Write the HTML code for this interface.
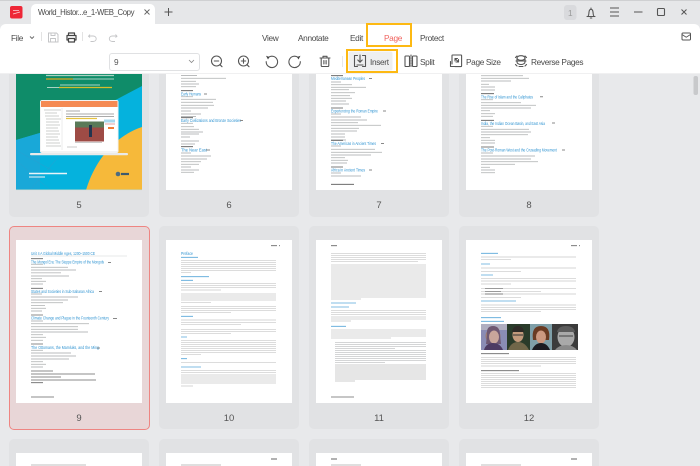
<!DOCTYPE html>
<html><head><meta charset="utf-8"><style>
html,body{margin:0;padding:0;width:700px;height:466px;overflow:hidden;background:#e8e9eb;font-family:"Liberation Sans","DejaVu Sans",sans-serif;color:#444}
div{position:absolute}
.t{position:absolute;font-size:8.3px;letter-spacing:-.35px;line-height:12px;white-space:nowrap;color:#4a4a4a}
.card{position:absolute;width:140px;background:#e1e2e4;border-radius:0 0 5px 5px}
.card.r{border-radius:5px}
.card.b{border-radius:5px 5px 0 0}
.pg{position:absolute;width:126px;background:#fff}
.n{position:absolute;width:140px;text-align:center;font-size:9.5px;color:#555;line-height:12px}
svg{position:absolute;left:0;top:0}
.ic{fill:none;stroke:#555;stroke-width:1.1;stroke-linecap:round;stroke-linejoin:round}
</style></head><body>
<div style="left:0;top:0;width:700px;height:24px;background:#e6e7e9"></div>
<div style="left:0;top:0;width:700px;height:1px;background:#cfd0d2"></div>
<div style="left:31px;top:4px;width:124px;height:24px;background:#fff;border-radius:5px 5px 0 0"></div>
<div style="left:0;top:24px;width:700px;height:49px;background:#fff;border-radius:6px 6px 0 0"></div>
<div style="left:0;top:73px;width:700px;height:1px;background:#f0f0f1"></div>

<!-- cards -->
<div class="card" style="left:9px;top:74px;height:143px"></div>
<div class="card" style="left:159px;top:74px;height:143px"></div>
<div class="card" style="left:309px;top:74px;height:143px"></div>
<div class="card" style="left:459px;top:74px;height:143px"></div>
<div class="card r" style="left:9px;top:226px;height:202px;width:139px;background:#e8d6d7;border:1px solid #ee8582"></div>
<div class="card r" style="left:159px;top:226px;height:203px"></div>
<div class="card r" style="left:309px;top:226px;height:203px"></div>
<div class="card r" style="left:459px;top:226px;height:203px"></div>
<div class="card b" style="left:9px;top:439px;height:27px"></div>
<div class="card b" style="left:159px;top:439px;height:27px"></div>
<div class="card b" style="left:309px;top:439px;height:27px"></div>
<div class="card b" style="left:459px;top:439px;height:27px"></div>

<div class="pg" style="left:166px;top:74px;height:116px"></div>
<div class="pg" style="left:316px;top:74px;height:116px"></div>
<div class="pg" style="left:466px;top:74px;height:116px"></div>
<div class="pg" style="left:16px;top:240px;height:163px"></div>
<div class="pg" style="left:166px;top:240px;height:163px"></div>
<div class="pg" style="left:316px;top:240px;height:163px"></div>
<div class="pg" style="left:466px;top:240px;height:163px"></div>
<div class="pg" style="left:16px;top:453px;height:13px"></div>
<div class="pg" style="left:166px;top:453px;height:13px"></div>
<div class="pg" style="left:316px;top:453px;height:13px"></div>
<div class="pg" style="left:466px;top:453px;height:13px"></div>

<div class="n" style="left:9px;top:200px">5</div>
<div class="n" style="left:159px;top:200px">6</div>
<div class="n" style="left:309px;top:200px">7</div>
<div class="n" style="left:459px;top:200px">8</div>
<div class="n" style="left:9px;top:413px">9</div>
<div class="n" style="left:159px;top:413px">10</div>
<div class="n" style="left:309px;top:413px">11</div>
<div class="n" style="left:459px;top:413px">12</div>

<svg width="700" height="466" viewBox="0 0 700 466">
<defs>
<filter id="b" x="-5%" y="-5%" width="110%" height="110%"><feGaussianBlur stdDeviation="0.3"/></filter>
<clipPath id="c5"><rect x="16" y="74" width="126" height="116"/></clipPath>
</defs>
<!-- page 5 cover -->
<g clip-path="url(#c5)">
<rect x="16" y="60" width="126" height="130" fill="#0f8c69"/>
<path d="M16 140 L70 124 L142 86 V190 H16Z" fill="#05b2dd"/>
<path d="M16 140 L40 133 L40 190 H16Z" fill="#19a8d8"/>
<path d="M142 127 C115 136 95 160 86 190 H142Z" fill="#f6b93a"/>
<path d="M50 190 L16 160 M30 190 L60 155 M16 150 L60 175" stroke="#2aa0d0" stroke-width=".5" fill="none"/>
<g filter="url(#b)">
<path d="M46 75.500h68" stroke="#a9d3c2" stroke-width="1.200"/>
<path d="M46 79h27" stroke="#d9a91f" stroke-width="1.300"/><path d="M73 79h41" stroke="#a9d3c2" stroke-width="1.100"/>
<path d="M60 85h40" stroke="#a9d3c2" stroke-width="1"/>
<path d="M47 87.500h12" stroke="#a9d3c2" stroke-width="1"/><path d="M59 87.500h53" stroke="#d6bd2b" stroke-width="1.300"/>
<rect x="40" y="100" width="78.500" height="53" rx="2" fill="#f2f3f3"/>
<rect x="41" y="101" width="76.500" height="6" fill="#f58a52"/>
<rect x="41" y="107" width="76.500" height="44" fill="#fff"/>
<path d="M44 110h17M45 113h12M45 116h14M46 119h15M46 122h13M46 125h14M46 128h12M46 131h13M46 134h14M46 137h12M46 140h13M46 143h14M46 146h15" stroke="#bcc0bf" stroke-width=".8"/>
<path d="M62 108v42" stroke="#d8d8d8" stroke-width=".5"/>
<path d="M66 111h14M66 114h48M66 116.500h48" stroke="#aaa" stroke-width=".9"/>
<path d="M66 118.500h31" stroke="#e7c33f" stroke-width="1.200"/>
<rect x="75" y="121.500" width="29" height="20" fill="#9e4b45"/>
<rect x="75" y="121.500" width="29" height="6" fill="#5a7a58"/>
<rect x="89" y="125" width="3" height="12" fill="#22354f"/>
<path d="M104 121h11" stroke="#a8d8ee" stroke-width="3"/><path d="M105 124h10" stroke="#f0d0d0" stroke-width="2"/>
<path d="M108 128h6" stroke="#ef7c34" stroke-width="2"/>
<path d="M75 142.500h27M67 147h10" stroke="#bbb" stroke-width=".8"/>
<rect x="30" y="153" width="98" height="2.200" rx="1" fill="#e9eaea"/>
<path d="M29 173.500h38" stroke="#e8f4f9" stroke-width="1.400"/><path d="M29 177h16" stroke="#cde9f2" stroke-width="1.200"/>
<circle cx="118" cy="174" r="2.300" fill="#4d6c80"/><path d="M121 174h8" stroke="#3d5a6e" stroke-width="2.200"/>
</g>
</g>
<rect x="16" y="189.500" width="126" height=".6" fill="#bcd6c8"/>

<g filter="url(#b)" font-family="Liberation Sans, sans-serif">
<!-- page 6 -->
<path d="M181 75.500h16M181 78.300h45M181 81.300h15M181 84h18M181 86.700h15M181 96.700h12M181 99.300h35M181 102.300h32M181 105.300h33M181 108h27M181 111h10M181 114h20M181 116.500h15M181 123.300h12M181 126.700h13M181 129.300h18M181 132h22M181 134h18M181 137h9M181 141h18M181 144h14M181 153h10M181 156h30M181 159h26M181 161.700h20M181 164.300h18M181 167h10M181 170h18M181 172.300h13" stroke="#a8aaac" stroke-width=".9" opacity=".8"/>
<path d="M181 90.700h12M181 117.700h12M181 146.700h12" stroke="#555" stroke-width=".8"/>
<text x="181" y="95.500" font-size="4.600" fill="#2f93d1" textLength="20" lengthAdjust="spacingAndGlyphs">Early Humans</text>
<text x="181" y="122" font-size="4.600" fill="#2f93d1" textLength="60" lengthAdjust="spacingAndGlyphs">Early Civilizations and Bronze Societies</text>
<text x="181" y="151.500" font-size="4.600" fill="#2f93d1" textLength="26" lengthAdjust="spacingAndGlyphs">The Near East</text>
<path d="M204 94h3M240 120.500h3M206 150h4" stroke="#888" stroke-width="1"/>
<!-- page 7 -->
<path d="M331 82h10M331 84.700h21M331 87.300h35M331 89.700h18M331 92.700h24M331 95.700h19M331 98.300h21M331 101h15M331 104h18M331 114h10M331 117h30M331 120h36M331 122.700h27M331 125.300h50M331 128.300h28M331 131h26M331 134h14M331 137h14M331 140h15M331 146h10M331 149.300h44M331 152.300h51M331 155h40M331 157.700h14M331 160.300h17M331 163h16M331 173h10M331 176h30" stroke="#a8aaac" stroke-width=".9" opacity=".8"/>
<path d="M331 75.700h12M331 108h12M331 140.300h12M331 167h12M331 184.300h23" stroke="#555" stroke-width=".8"/>
<text x="331" y="80" font-size="4.600" fill="#2f93d1" textLength="34" lengthAdjust="spacingAndGlyphs">Mediterranean Peoples</text>
<text x="331" y="112.500" font-size="4.600" fill="#2f93d1" textLength="47" lengthAdjust="spacingAndGlyphs">Experiencing the Roman Empire</text>
<text x="331" y="144.800" font-size="4.600" fill="#2f93d1" textLength="45" lengthAdjust="spacingAndGlyphs">The Americas in Ancient Times</text>
<text x="331" y="171.500" font-size="4.600" fill="#2f93d1" textLength="34" lengthAdjust="spacingAndGlyphs">Africa in Ancient Times</text>
<path d="M369 78.500h3M383 111h3M381 143.500h3M369 170h3" stroke="#888" stroke-width="1"/>
<!-- page 8 -->
<path d="M481 75.700h42M481 78.300h48M481 81h30M481 84.300h8M481 87h14M481 90h14M481 99.700h12M481 102.700h40M481 105.300h55M481 108h50M481 110.700h9M481 113.700h14M481 116.300h12M481 126.300h12M481 129.300h48M481 132h50M481 134.700h47M481 137.700h9M481 140.300h14M481 143h14M481 153h12M481 156h54M481 159h50M481 161.700h57M481 164.300h34M481 167.300h9M481 170h14M481 172.700h14" stroke="#a8aaac" stroke-width=".9" opacity=".8"/>
<path d="M481 93.700h13M481 120.300h13M481 147h13" stroke="#555" stroke-width=".8"/>
<text x="481" y="98.500" font-size="4.600" fill="#2f93d1" textLength="52" lengthAdjust="spacingAndGlyphs">The Rise of Islam and the Caliphates</text>
<text x="481" y="125" font-size="4.600" fill="#2f93d1" textLength="64" lengthAdjust="spacingAndGlyphs">India, the Indian Ocean Basin, and East Asia</text>
<text x="481" y="151.500" font-size="4.600" fill="#2f93d1" textLength="76" lengthAdjust="spacingAndGlyphs">The Post-Roman West and the Crusading Movement</text>
<path d="M540 96.700h3M552 123h3M562 150h3" stroke="#888" stroke-width="1"/>
<!-- page 9 -->
<path d="M31 256h96" stroke="#cfd1d3" stroke-width=".6"/>
<path d="M31 264.300h12M31 267.300h37M31 270h45M31 272.800h30M31 276h38M31 278.700h11M31 281.300h15M31 284h12M31 294h11M31 297h47M31 300h37M31 302.700h32M31 305.600h14M31 308.300h15M31 311h11M31 321h12M31 323.700h58M31 326.700h47M31 329.300h47M31 332h57M31 334.700h12M31 337.300h15M31 340.300h12M31 350.300h12M31 353h40M31 356h45M31 359h38M31 361.700h12M31 364.300h15M31 367h12" stroke="#a8aaac" stroke-width=".9" opacity=".8"/>
<path d="M31 258.700h12M31 288.300h12M31 315h12M31 344h12M31 371h22M31 374h64M31 377h30M31 380h65M31 382.700h12M31 397h23" stroke="#666" stroke-width=".8"/>
<text x="31" y="255" font-size="4.700" fill="#2f93d1" textLength="64" lengthAdjust="spacingAndGlyphs">Unit 4 A Global Middle Ages, 1200–1500 CE</text>
<text x="31" y="263.500" font-size="4.600" fill="#2f93d1" textLength="73" lengthAdjust="spacingAndGlyphs">The Mongol Era: The Steppe Empire of the Mongols</text>
<text x="31" y="292.800" font-size="4.600" fill="#2f93d1" textLength="63" lengthAdjust="spacingAndGlyphs">States and Societies in Sub-Saharan Africa</text>
<text x="31" y="319.500" font-size="4.600" fill="#2f93d1" textLength="78" lengthAdjust="spacingAndGlyphs">Climate Change and Plague in the Fourteenth Century</text>
<text x="31" y="348.800" font-size="4.600" fill="#2f93d1" textLength="68" lengthAdjust="spacingAndGlyphs">The Ottomans, the Mamluks, and the Ming</text>
<path d="M108 262.500h3M99 291.500h3M113 318.500h4M97 348h3" stroke="#888" stroke-width="1"/>
<!-- page 10 -->
<path d="M271 245.700h6M279 245.700h1" stroke="#666" stroke-width=".9"/>
<path d="M181 260.700h95M181 262.700h95M181 264.300h95M181 266.300h95M181 268.300h95M181 270.300h95M181 272.300h10M181 283.700h95M181 285.700h95M181 287.700h95M181 290h40M181 294h95M181 296h95M181 298h95M181 300h95M181 302.300h30M181 306.300h95M181 308.300h95M181 310.300h95M181 312.300h50M181 320h95M181 322.300h95M181 324.300h60M181 329.300h95M181 331.300h95M181 333.300h50M181 340.700h95M181 342.700h95M181 344.700h95M181 346.700h95M181 348.700h95M181 350.700h95M181 352.700h95M181 354.700h20M181 362.700h95M181 370.700h95M181 372.700h95M181 375h95M181 377h95M181 379h95M181 381h95M181 383h95M181 386h12" stroke="#a0a2a4" stroke-width=".7" opacity=".6"/>
<text x="181" y="255" font-size="4.600" fill="#2f93d1" textLength="12" lengthAdjust="spacingAndGlyphs">Preface</text>
<path d="M181 257.300h17M181 276.700h28M181 280.300h12M181 316.300h12M181 337h6M181 358.700h6M181 367h20" stroke="#3a97d3" stroke-width=".8" opacity=".85"/>
<!-- page 11 -->
<path d="M331 245.700h6" stroke="#666" stroke-width=".9"/>
<path d="M331 253.300h95M331 255.300h95M331 257.300h95M331 259.300h95M331 261.300h87M331 265h95M331 267h95M331 269h95M331 271h95M331 273h95M331 275h95M331 277h95M331 279h95M331 281h95M331 283h95M331 285h95M331 287h95M331 289h95M331 291h95M331 293h95M331 295h95M331 297h95M331 299h30M331 310.700h95M331 312.700h95M331 314.700h95M331 317h95M331 319h95M331 321h20M331 330h95M331 332h95M331 334h95M331 336h95M331 338h60" stroke="#a0a2a4" stroke-width=".7" opacity=".6"/>
<path d="M335 342.700h91M335 344.700h91M335 346.700h91M335 348.700h60M335 350.700h91M335 352.700h91M335 354.700h91M335 356.700h91M335 358.700h91M335 360.700h91M335 362.700h50M335 365h91M335 367h91M335 369h91M335 371h91M335 373h91M335 375h91M335 377h91M335 379h91M335 381h20" stroke="#8e9092" stroke-width=".7" opacity=".6"/>
<path d="M331 303h25M331 307h18M331 326.300h15" stroke="#3a97d3" stroke-width=".8" opacity=".85"/>
<path d="M331 397h23" stroke="#666" stroke-width=".8"/>
<!-- page 12 -->
<path d="M571 245.700h6M579 245.700h1" stroke="#666" stroke-width=".9"/>
<path d="M481 257h95M481 259.700h30M481 268h95M481 271.300h40M481 278.300h95M481 281h95M481 284h30M481 288.300h95M481 291.300h60M481 294h95M481 297.300h40M481 305h95M481 307.300h95M481 309.300h95M481 311.300h60M481 357.300h95M481 359.300h95M481 361.300h95M481 363.300h95M481 366h60M481 373.300h95M481 375.300h95M481 377.300h95M481 379.300h95M481 381.300h95M481 383.300h95M481 385.300h95M481 387.300h95" stroke="#a0a2a4" stroke-width=".7" opacity=".6"/>
<path d="M485 288.300h18M485 291.300h16M485 294h18" stroke="#666" stroke-width=".7"/>
<path d="M481 353.700h28M481 370.700h38" stroke="#666" stroke-width=".8"/>
<path d="M481 253.300h17M481 264h9M481 275h12M481 301h35M481 317.700h20M481 321.300h23" stroke="#3a97d3" stroke-width=".8" opacity=".85"/>
<!-- row 3 -->
<path d="M331 459h6M271 459h6M571 459h6" stroke="#666" stroke-width=".9"/>
<path d="M31 465h55M181 465h40M331 465h30M481 465h40" stroke="#aaa" stroke-width=".8"/>
</g>
<!-- photos -->
<g filter="url(#b)">
<rect x="481" y="324" width="26" height="26" fill="#8a8cb5"/>
<path d="M481 324h26v6h-26z" fill="#b0aec0"/>
<circle cx="493" cy="336" r="7.500" fill="#9b7b74"/><path d="M487 335q-1-9 6-9t7 9l1 9h-15z" fill="#6e5872"/><ellipse cx="494" cy="337" rx="5" ry="6.500" fill="#c9a69b"/><path d="M484 350q2-7 9-7t10 7z" fill="#4d3a63"/>
<rect x="507" y="324" width="23" height="26" fill="#2c3a2c"/>
<ellipse cx="518" cy="335" rx="5.500" ry="7" fill="#c39a7c"/><path d="M512 332q1-6 6-6t6 6z" fill="#2f2a25"/><path d="M508 350q3-8 10-8t11 8z" fill="#6f6649"/><path d="M513 335h10" stroke="#333" stroke-width="1"/>
<rect x="530" y="324" width="22" height="26" fill="#7f9fa8"/>
<path d="M533 340q-2-14 8-14t8 14z" fill="#6a3a24"/><ellipse cx="541" cy="337" rx="5" ry="6.500" fill="#cc9980"/><path d="M532 350q3-7 9-7t9 7z" fill="#1a1d22"/>
<rect x="552" y="324" width="26" height="26" fill="#3a3a3a"/>
<ellipse cx="566" cy="337" rx="8.500" ry="10" fill="#a9a9a9"/><path d="M557 332q1-6 9-6t9 6z" fill="#5b5b5b"/><path d="M559 336h14" stroke="#555" stroke-width="1.200"/><path d="M555 350q4-5 11-5t11 5z" fill="#8a8a8a"/>
</g>
<path d="M488 351.700h85" stroke="#a0a2a4" stroke-width=".7" filter="url(#b)"/>

<!-- scrollbar -->
<rect x="693.500" y="76" width="4.500" height="19" rx="2" fill="#c8c9cb"/>

<!-- logo -->
<rect x="10" y="6" width="12.500" height="12.500" rx="2" fill="#ee2737"/>
<path d="M13 10.500h6M13 14l7-2" stroke="#fff" stroke-width=".8" fill="none" opacity=".8"/>
<!-- tab close / plus -->
<path d="M144.500 9.500l5 5M149.500 9.500l-5 5" stroke="#666" stroke-width=".9" fill="none"/>
<path d="M168.500 8v8M164.500 12h8" stroke="#555" stroke-width="1" fill="none"/>
<!-- top right -->
<rect x="564" y="5" width="12.500" height="15" rx="3" fill="#d9dadd"/>
<path class="ic" d="M587 16.500h8M588 16.500c1-1.500 .8-3 1-4.500c.2-1.500 1-2.700 2-2.700s1.800 1.200 2 2.700c.2 1.500 0 3 1 4.500M590.300 18h1.500M591 9.300V8"/>
<path d="M610 8h9M610 12h9M610 16h9" stroke="#555" stroke-width="1" fill="none"/>
<path d="M634 12h8.500" stroke="#555" stroke-width="1" fill="none"/>
<rect x="657.500" y="8.500" width="7" height="7" rx="1" fill="none" stroke="#555" stroke-width="1.100"/>
<path d="M681.500 9.500l5 5M686.500 9.500l-5 5" stroke="#555" stroke-width="1" fill="none"/>
<!-- mail -->
<rect x="682" y="33" width="8.500" height="7" rx="1" fill="none" stroke="#555" stroke-width="1"/>
<path d="M682 34.500l4.200 2.700 4.300-2.700" stroke="#555" stroke-width=".9" fill="none"/>
<!-- file row -->
<path d="M30 36.500l2 2 2-2" stroke="#666" stroke-width=".9" fill="none"/>
<path d="M41.500 32v9M82.500 32v9" stroke="#dcdcdc" stroke-width=".8"/>
<path d="M48.500 33h8l1.500 1.500v7.500h-9.500z" fill="none" stroke="#c4c5c7" stroke-width="1"/>
<path d="M51 33v2.500h4V33M50.500 42v-3.500h5V42" fill="none" stroke="#c4c5c7" stroke-width=".9"/>
<path class="ic" d="M68.500 35.500v-2.500h6v2.500M68.500 40h-1.500v-4.500h9V40h-1.500M68.500 38.500h6v3.500h-6z" style="stroke:#444;stroke-width:1.200"/>
<path d="M90 34.500l-1.500 1.700 1.500 1.300M88.500 36h4.500c2 0 3.200 1.300 3.200 2.800s-1.200 2.700-3.200 2.700h-2.500" fill="none" stroke="#c4c5c7" stroke-width=".9"/>
<path d="M115.500 34.500l1.500 1.700-1.500 1.300M117 36h-4.500c-2 0-3.200 1.300-3.200 2.800s1.200 2.700 3.200 2.700h2.500" fill="none" stroke="#c4c5c7" stroke-width=".9"/>
<!-- zoom icons row -->
<path d="M189 60l2.500 2.500 2.500-2.500" stroke="#888" stroke-width=".8" fill="none"/>
<g class="ic">
<circle cx="216.500" cy="61" r="5"/><path d="M214.300 61h4.400M220 64.700l2 2"/>
<circle cx="243.500" cy="61" r="5"/><path d="M241.300 61h4.400M243.500 58.800v4.400M247 64.700l2 2"/>
<path d="M268.500 57.300a5.700 5.700 0 1 1-2.300 4.400"/>
<path d="M298 57.300a5.700 5.700 0 1 0 2.300 4.400"/>
<path d="M320 58h10M323 58v-1.700h4V58M321.200 58v7.500c0 .7.400 1 1 1h5.600c.6 0 1-.3 1-1V58M323.900 60.500v3.500M326.100 60.500v3.500"/>
</g>
<path d="M266 55.800l3.500 1.200-1.500 2.500z" fill="#444"/>
<path d="M300.500 55.800l-3.500 1.200 1.500 2.500z" fill="#444"/>
<path d="M342.500 56v11" stroke="#e2e2e2" stroke-width=".8"/>
<!-- insert box -->
<rect x="347" y="50" width="50" height="22" fill="#fff" stroke="#fdb913" stroke-width="2"/>
<rect x="348.500" y="51.500" width="44" height="19" rx="2" fill="#eeeff0"/>
<g class="ic">
<path d="M357.500 55.500h-3v11h3M362.500 55.500h3v11h-3M360 55v7M357.800 60l2.200 2.300 2.200-2.300M357 65h6"/>
<rect x="405" y="56" width="4.500" height="10.500" rx=".8"/><rect x="412.500" y="56" width="4.500" height="10.500" rx=".8"/><path d="M411 55v12.500" stroke-dasharray="1.500 1"/>
<path d="M452 64v-8.500c0-.4.300-.5.500-.5H461c.4 0 .6.300.6.600V66c0 .4-.2.600-.6.600h-6M450.500 61.500v5h5M455 58.500l3.500 3.500M455 58.500h2.500M455 58.500v2.500M458.500 62h-2.500M458.500 62v-2.500"/>
<ellipse cx="521" cy="58" rx="4" ry="2.300"/><path d="M517 58v4c0 1.500 2 2.500 4 2.500s4-1 4-2.500v-4M516 61h10M515.500 57.500l1.500-1.500M526.500 57.500l-1.500-1.500M515.500 64.500l1.500 1.500M526.500 64.500l-1.500 1.500M519 66.500h4"/>
</g>
<!-- page box -->
<rect x="367" y="24" width="44" height="22" fill="none" stroke="#fdb913" stroke-width="2"/>
</svg>

<span class="t" style="left:38px;top:6.500px;font-size:7.800px;letter-spacing:-.4px">World_Histor...e_1-WEB_Copy</span>
<span class="t" style="left:568px;top:7px;color:#9a9a9a">1</span>
<span class="t" style="left:11px;top:32px">File</span>
<span class="t" style="left:262px;top:32px">View</span>
<span class="t" style="left:298px;top:32px">Annotate</span>
<span class="t" style="left:350px;top:32px">Edit</span>
<span class="t" style="left:384px;top:32px;color:#f0645f">Page</span>
<span class="t" style="left:420px;top:32px">Protect</span>
<div style="left:109px;top:53px;width:89px;height:16px;border:1px solid #e0e1e3;border-radius:3px;background:transparent"></div>
<span class="t" style="left:114px;top:56px;color:#555">9</span>
<span class="t" style="left:370px;top:56px">Insert</span>
<span class="t" style="left:420px;top:56px">Split</span>
<span class="t" style="left:466px;top:56px">Page Size</span>
<span class="t" style="left:531px;top:56px">Reverse Pages</span>
</body></html>
